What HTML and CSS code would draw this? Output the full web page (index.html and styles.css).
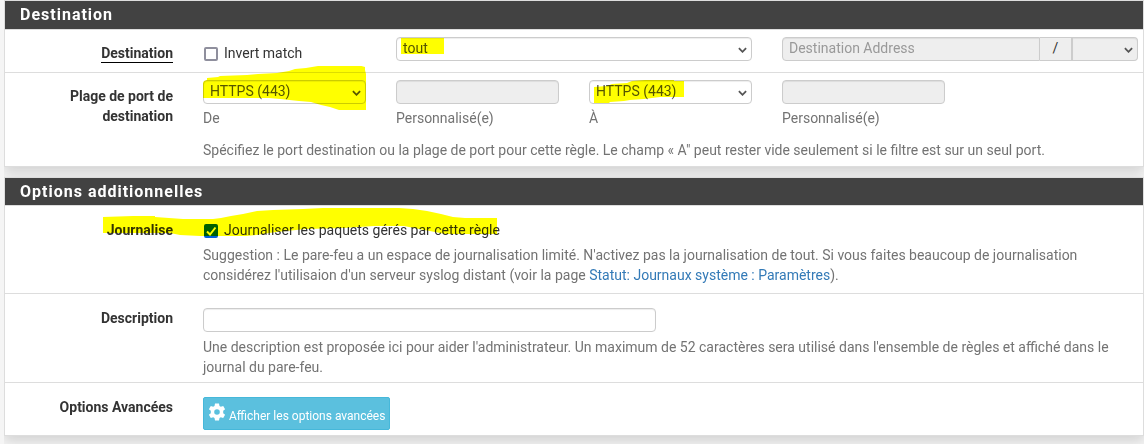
FILE: index.html
```
<!DOCTYPE html>
<html lang="fr">
<head>
<meta charset="utf-8">
<title>Règle de pare-feu</title>
<link rel="stylesheet" href="styles.css">
</head>
<body>
<main class="page">
  <section class="panel panel-compact">
    <h2 class="panel-title">Destination</h2>
    <div class="row row-line">
      <div class="label"><span class="underlined">Destination</span></div>
      <div class="cell check-cell">
        <label class="check"><span class="box"><input type="checkbox"></span>Invert match</label>
      </div>
      <div class="cell span-two">
        <div class="select">
          <select class="control" aria-label="Type de destination"><option>tout</option></select>
          <svg class="chevron" viewBox="0 0 10 6"><path d="M1 1l4 4 4-4"/></svg>
          <svg class="mark mark-any" viewBox="0 0 43 16"><path d="M0 0h43v16H0z"/></svg>
        </div>
      </div>
      <div class="cell span-two">
        <div class="group">
          <input class="control address" type="text" placeholder="Destination Address" aria-label="Destination Address" disabled>
          <span class="addon">/</span>
          <div class="select mask">
            <select class="control" aria-label="Masque" disabled><option></option></select>
            <svg class="chevron" viewBox="0 0 10 6"><path d="M1 1l4 4 4-4"/></svg>
          </div>
        </div>
      </div>
    </div>
    <div class="row">
      <div class="label">Plage de port de destination</div>
      <div class="cell">
        <div class="select">
          <select class="control" id="from"><option>HTTPS (443)</option></select>
          <svg class="chevron" viewBox="0 0 10 6"><path d="M1 1l4 4 4-4"/></svg>
          <svg class="mark mark-from" viewBox="0 0 163 45"><path d="M0 17l1-2 3-1v-2l11-1 2-1 27-1 11-1 19-1 12-2 6-2 11-1 12-2 12-1h28l7 2v3l1 4v4l2 21v11h-29l-9-3-9-2-10-3-12-1-19-2-11-1H0z"/></svg>
        </div>
        <label class="help" for="from">De</label>
      </div>
      <div class="cell">
        <input class="control" id="from-custom" type="text" disabled>
        <label class="help" for="from-custom">Personnalisé(e)</label>
      </div>
      <div class="cell">
        <div class="select">
          <select class="control" id="to"><option>HTTPS (443)</option></select>
          <svg class="chevron" viewBox="0 0 10 6"><path d="M1 1l4 4 4-4"/></svg>
          <svg class="mark mark-to" viewBox="0 0 90 23"><path d="M0 7l13-1 5-2 15-1 5-2 13-1h29v1h10v16H66l-8 1-8 1-14 1-6 1-14 1-1 1H0z"/></svg>
        </div>
        <label class="help" for="to">À</label>
      </div>
      <div class="cell">
        <input class="control" id="to-custom" type="text" disabled>
        <label class="help" for="to-custom">Personnalisé(e)</label>
      </div>
      <p class="note">Spécifiez le port destination ou la plage de port pour cette règle. Le champ « A" peut rester vide seulement si le filtre est sur un seul port.</p>
    </div>
  </section>

  <section class="panel">
    <h2 class="panel-title">Options additionnelles</h2>
    <div class="row row-log">
      <div class="label">Journalise</div>
      <div class="cell wide">
        <label class="check"><span class="box"><input type="checkbox" checked><svg class="tick" viewBox="0 0 14 14"><path d="M3 7.5l3 3 5.500-7"/></svg></span>Journaliser les paquets gérés par cette règle</label>
        <p class="text">Suggestion : Le pare-feu a un espace de journalisation limité. N'activez pas la journalisation de tout. Si vous faites beaucoup de journalisation considérez l'utilisaion d'un serveur syslog distant (voir la page <a href="#">Statut: Journaux système : Paramètres</a>).</p>
        <svg class="mark mark-log" viewBox="0 0 394 28"><path d="M0 9l30-1h22v1l14 1 14 1h30l8-1 10-2 12-2 14-3 16-1 30-1 20-1 34-1h30l12 1 14 1 14 2 14 3 12 3 12 1h42v16h-62l-10-2-16-3-15-3h-30l-30 2-38 1-30 3-20 3-10 1H97l-20-1-10-2H0z"/></svg>
      </div>
    </div>
    <div class="row">
      <label class="label" for="description">Description</label>
      <div class="cell wide">
        <input class="control description" id="description" type="text">
        <p class="text">Une description est proposée ici pour aider l'administrateur. Un maximum de 52 caractères sera utilisé dans l'ensemble de règles et affiché dans le journal du pare-feu.</p>
      </div>
    </div>
    <div class="row">
      <div class="label">Options Avancées</div>
      <div class="cell wide">
        <button class="button" type="button">
          <svg class="gear" viewBox="0 0 18 18"><path fill-rule="evenodd" d="M7 .5h4l.5 2.400 1.300.8 2.400-.8 1.900 3.300-1.900 1.600v2.400l1.900 1.600-1.900 3.300-2.400-.8-1.300.8-.5 2.400H7l-.5-2.400-1.300-.8-2.400.8-1.900-3.300 1.900-1.600V7.800L.9 6.200l1.900-3.300 2.400.8 1.300-.8zM9 6.200a2.800 2.800 0 1 0 0 5.600 2.800 2.800 0 0 0 0-5.600z"/></svg>
          <span>Afficher les options avancées</span>
        </button>
      </div>
    </div>
  </section>
</main>
</body>
</html>
```
FILE: styles.css
```
* { box-sizing: border-box; }

body {
  margin: 0;
  background: #f5f5f5;
  color: #333;
  font: 14px/20px Roboto, "Liberation Sans", sans-serif;
}

.page {
  margin-left: 4px;
  padding-bottom: 16px;
  overflow: hidden;
}

.panel {
  margin-bottom: 10px;
  border: 1px solid #ddd;
  background: #fff;
  box-shadow: 0 5px 12px rgba(0, 0, 0, .15);
  overflow: hidden;
}

.panel:last-child { margin-bottom: 0; }

.panel-title {
  margin: 0;
  padding: 4px 15px 3px;
  background: #424242;
  color: #fff;
  font-size: 16px;
  font-weight: 700;
  line-height: 20px;
  letter-spacing: 1px;
}

.panel-compact .panel-title { padding-bottom: 4px; }

.row {
  display: grid;
  grid-template-columns: repeat(6, 1fr);
  margin: 0 -10px;
  padding: 14px 0 5px;
  border-top: 1px solid #ddd;
}

.panel-compact .row { padding: 7px 0 6px; }
.panel-compact .row-line { padding-bottom: 9px; }
.row-log { padding-bottom: 8px; }

.label {
  padding: 0 15px;
  font-weight: 700;
  text-align: right;
}

.panel-compact .label { padding-top: 6px; }

.underlined {
  display: inline-block;
  line-height: 18px;
  border-bottom: 1px solid #000;
}

.cell {
  position: relative;
  min-width: 0;
  padding: 0 15px;
}

.span-two { grid-column: span 2; }
.wide { grid-column: span 5; }
.check-cell { padding-top: 6px; }

.check {
  display: flex;
  gap: 6px;
  padding-left: 1px;
}

.box {
  position: relative;
  width: 14px;
  height: 14px;
  margin-top: 4px;
}

.box input {
  display: block;
  appearance: none;
  width: 14px;
  height: 14px;
  margin: 0;
  border: 2px solid #8f8f9d;
  border-radius: 2px;
  background: #fff;
}

.box input:checked {
  border-color: #0060df;
  background: #0060df;
}

.tick {
  position: absolute;
  inset: 0;
  fill: none;
  stroke: #fff;
  stroke-width: 2;
  pointer-events: none;
}

.control {
  display: block;
  appearance: none;
  width: 100%;
  height: 24px;
  margin: 0;
  padding: 0 6px 2px;
  border: 1px solid #ccc;
  border-radius: 4px;
  background: #fff;
  box-shadow: inset 0 1px 1px rgba(0, 0, 0, .075);
  color: #555;
  font: inherit;
  opacity: 1;
}

.control:disabled { background: #eee; }
.control::placeholder { color: #999; }
.description { width: calc(50% - 15px); }

.select { position: relative; }

.chevron {
  position: absolute;
  top: 10px;
  right: 5px;
  width: 9px;
  height: 6px;
  fill: none;
  stroke: #555;
  stroke-width: 2;
  pointer-events: none;
}

.group { display: flex; }

.address {
  flex: 1;
  min-width: 0;
  border-radius: 4px 0 0 4px;
}

.addon {
  width: 31px;
  height: 24px;
  border: solid #ccc;
  border-width: 1px 0;
  background: #eee;
  line-height: 21px;
  text-align: center;
}

.mask { width: 67px; }

.mask .control {
  border-left-width: 2px;
  border-radius: 0 4px 4px 0;
}

.help {
  display: block;
  margin-top: 4px;
  color: #737373;
}

.note {
  grid-column: 2 / -1;
  margin: 12px 0 0;
  padding: 0 15px;
  color: #737373;
}

.text {
  margin: 5px 0 0;
  color: #737373;
}

a {
  color: #337ab7;
  text-decoration: none;
}

.button {
  display: flex;
  align-items: center;
  gap: 3px;
  height: 33px;
  padding: 0 4px;
  border: 1px solid #46b8da;
  border-radius: 2px;
  background: #5bc0de;
  color: #fff;
  font: 12px/18px Roboto, "Liberation Sans", sans-serif;
}

.button span { padding-top: 4px; }

.gear {
  width: 18px;
  height: 18px;
  margin-bottom: 4px;
  fill: #fff;
}

/* Highlighter strokes drawn over the form */
.mark {
  position: absolute;
  fill: #ff0;
  mix-blend-mode: multiply;
  pointer-events: none;
}

.mark-any { top: 1px; left: 5px; width: 43px; }
.mark-from { top: -14px; left: 0; width: 163px; }
.mark-to { top: 0; left: 5px; width: 90px; }
.mark-log { top: -12px; left: -85px; width: 394px; }
```
